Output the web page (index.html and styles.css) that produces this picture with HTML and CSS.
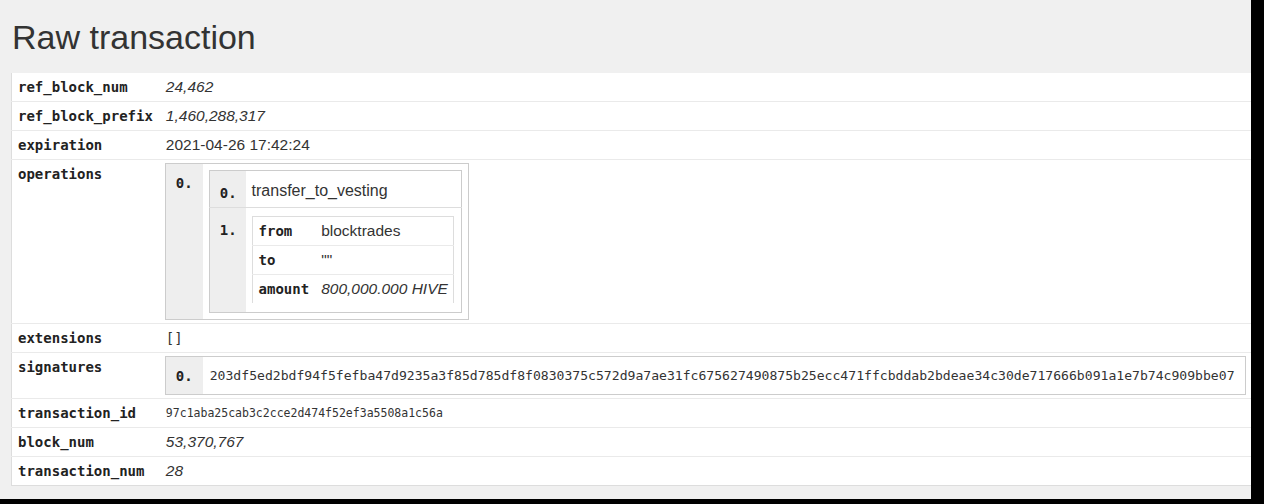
FILE: index.html
```html
<!DOCTYPE html>
<html>
<head>
<meta charset="utf-8">
<title>Raw transaction</title>
<link rel="stylesheet" href="styles.css">
</head>
<body>
<div class="page">
  <h1 class="title">Raw transaction</h1>
  <table class="obj main">
    <tr><td class="k">ref_block_num</td><td class="v num">24,462</td></tr>
    <tr><td class="k">ref_block_prefix</td><td class="v num">1,460,288,317</td></tr>
    <tr><td class="k">expiration</td><td class="v">2021-04-26 17:42:24</td></tr>
    <tr><td class="k">operations</td><td class="v box">
      <table class="list">
        <tr><td class="i i-outer">0.</td><td class="c">
          <table class="list">
            <tr><td class="i i-inner">0.</td><td class="c txt">transfer_to_vesting</td></tr>
            <tr><td class="i i-inner">1.</td><td class="c sub">
              <table class="obj nested">
                <tr><td class="k">from</td><td class="v">blocktrades</td></tr>
                <tr><td class="k">to</td><td class="v">""</td></tr>
                <tr><td class="k">amount</td><td class="v num">800,000.000 HIVE</td></tr>
              </table>
            </td></tr>
          </table>
        </td></tr>
      </table>
    </td></tr>
    <tr><td class="k">extensions</td><td class="v mono">[]</td></tr>
    <tr><td class="k">signatures</td><td class="v box">
      <table class="list wide">
        <tr><td class="i i-sig">0.</td><td class="c hash">203df5ed2bdf94f5fefba47d9235a3f85d785df8f0830375c572d9a7ae31fc675627490875b25ecc471ffcbddab2bdeae34c30de717666b091a1e7b74c909bbe07</td></tr>
      </table>
    </td></tr>
    <tr><td class="k">transaction_id</td><td class="v txid">97c1aba25cab3c2cce2d474f52ef3a5508a1c56a</td></tr>
    <tr><td class="k">block_num</td><td class="v num">53,370,767</td></tr>
    <tr><td class="k">transaction_num</td><td class="v num">28</td></tr>
  </table>
</div>
</body>
</html>
```
FILE: styles.css
```css
html, body {
  margin: 0;
  padding: 0;
  background: #000;
}
.page {
  width: 1251px;
  height: 499px;
  overflow: hidden;
  background: #f0f0f0;
  font-family: "Liberation Sans", Arial, sans-serif;
  color: #333;
}
.title {
  margin: 17px 0 16px 12px;
  font-size: 34px;
  line-height: 40px;
  font-weight: normal;
  color: #333;
}
table {
  border-collapse: collapse;
  border-spacing: 0;
}
td {
  padding: 0;
  vertical-align: top;
}
.obj {
  background: #fff;
}
.main {
  margin-left: 11px;
  width: 1260px;
  border-left: 1px solid #ddd;
  border-bottom: 1px solid #ddd;
}
.nested {
  border: 1px solid #ddd;
  border-bottom: none;
}
.obj tr + tr > td {
  border-top: 1px solid #eaeaea;
}
.obj > tbody > tr > .k,
.obj > tr > .k {
  font-family: "DejaVu Sans Mono", monospace;
  font-weight: bold;
  font-size: 14px;
  line-height: 16px;
  padding: 6px;
  color: #222;
  white-space: nowrap;
  width: 1px;
}
.v {
  font-size: 15.5px;
  line-height: 16px;
  padding: 6px 6px 6px 7px;
  white-space: nowrap;
}
.nested .v {
  padding-left: 6px;
  padding-right: 5px;
}
.num {
  font-style: italic;
}
.mono {
  font-family: "DejaVu Sans Mono", monospace;
  font-size: 14px;
}
.txid {
  font-family: "DejaVu Sans Mono", monospace;
  font-size: 11.5px;
}
.v.box {
  padding: 3px 6px 3px 6px;
}
.list {
  border: 1px solid #ccc;
  background: #fff;
}
.wide {
  width: 1081px;
}
.list > tbody > tr + tr > td {
  border-top: 1px solid #ddd;
}
.i {
  background: #eee;
  font-family: "DejaVu Sans Mono", monospace;
  font-weight: bold;
  font-size: 14px;
  line-height: 16px;
  padding: 11px 10px 0 10px;
  width: 16px;
  color: #222;
}
.i-inner {
  padding-right: 9px;
  padding-top: 14px;
}
.i-sig {
  padding-top: 11px;
  padding-bottom: 10px;
}
.c {
  padding: 6px;
}
.c.txt {
  font-size: 16px;
  line-height: 16px;
  padding: 12px 8px 8px 6px;
}
.c.sub {
  padding: 8px 7px 9px 6px;
}
.c.hash {
  font-family: "DejaVu Sans Mono", monospace;
  font-size: 13.1px;
  line-height: 16px;
  padding: 11px 7px 10px 7px;
  white-space: nowrap;
}
```
